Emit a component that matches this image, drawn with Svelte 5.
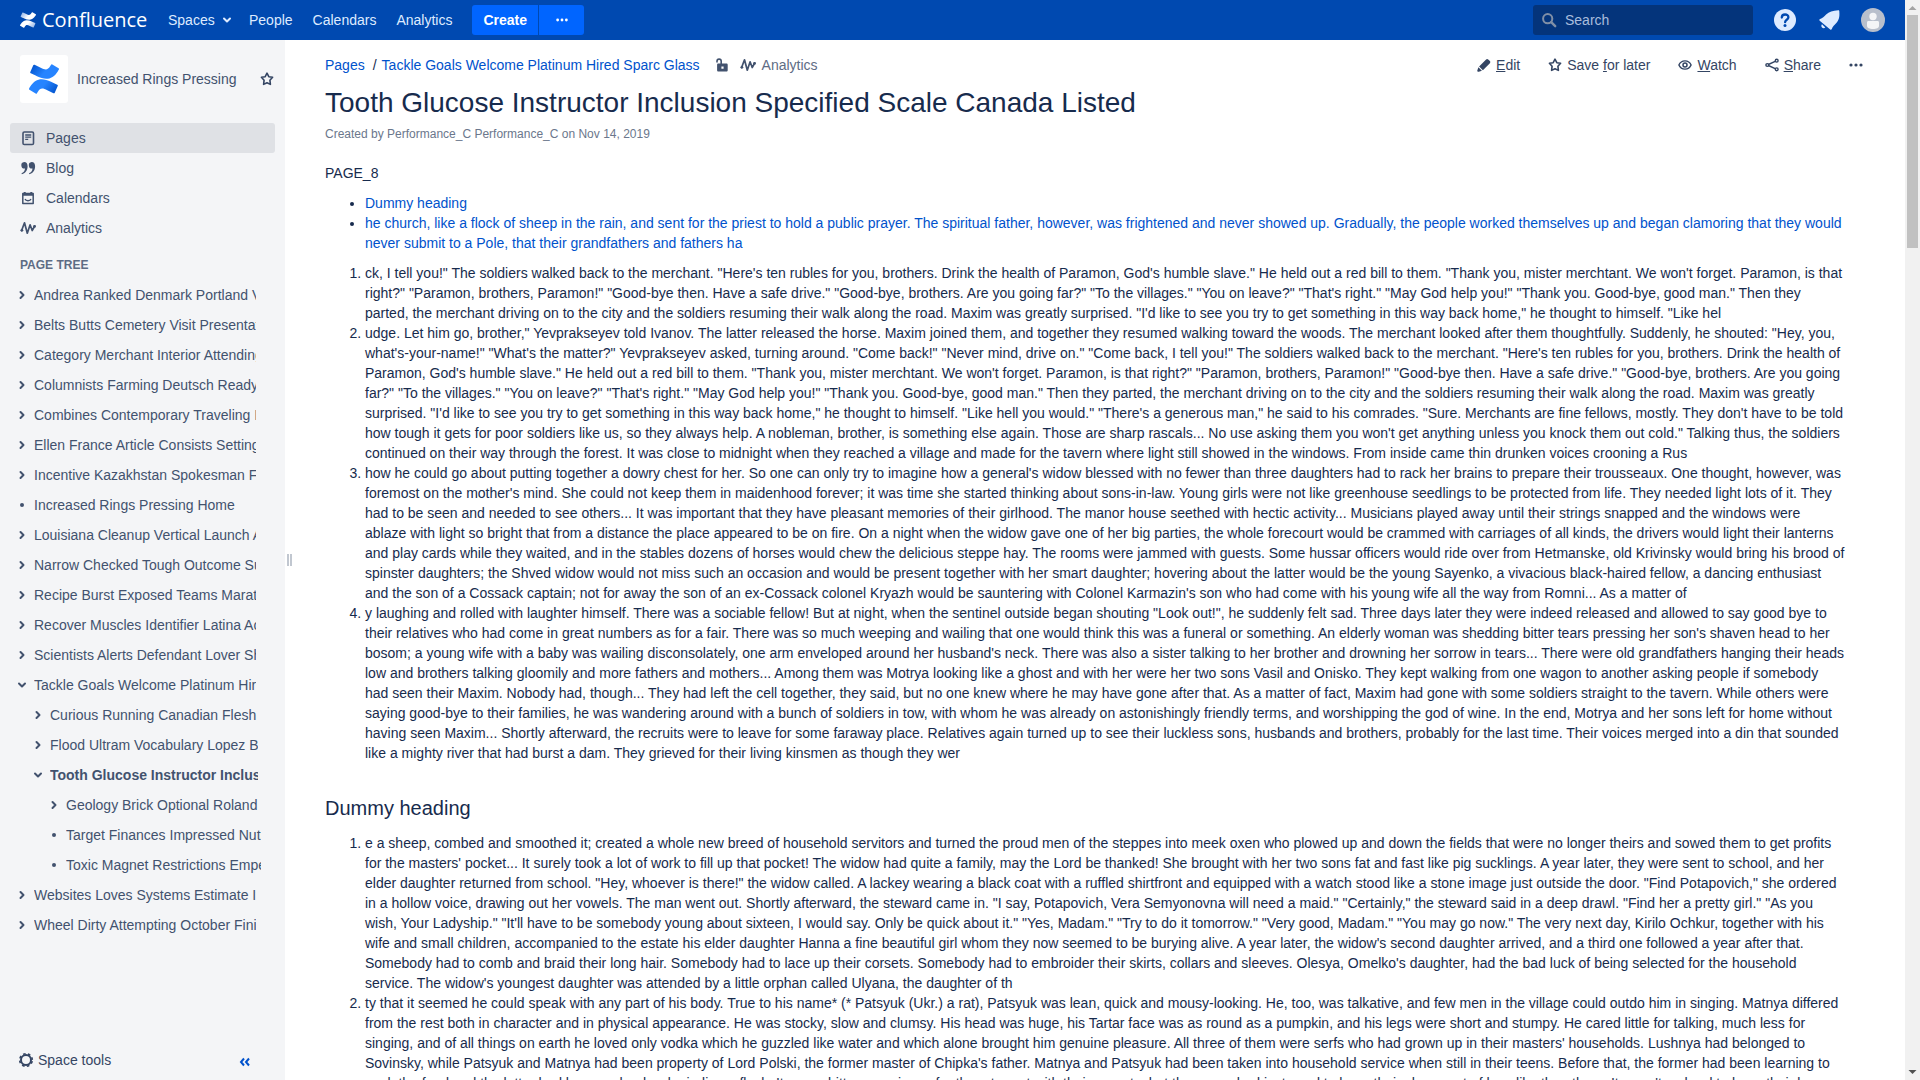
<script>
  const spaceNav = [
    { label: 'Pages', icon: 'pages', active: true },
    { label: 'Blog', icon: 'blog' },
    { label: 'Calendars', icon: 'calendar' },
    { label: 'Analytics', icon: 'pulse' }
  ];

  const tree = [
    { t: 'Andrea Ranked Denmark Portland Vast', k: 'closed', l: 0 },
    { t: 'Belts Butts Cemetery Visit Presentation', k: 'closed', l: 0 },
    { t: 'Category Merchant Interior Attending', k: 'closed', l: 0 },
    { t: 'Columnists Farming Deutsch Ready', k: 'closed', l: 0 },
    { t: 'Combines Contemporary Traveling Inn', k: 'closed', l: 0 },
    { t: 'Ellen France Article Consists Settings', k: 'closed', l: 0 },
    { t: 'Incentive Kazakhstan Spokesman Find', k: 'closed', l: 0 },
    { t: 'Increased Rings Pressing Home', k: 'leaf', l: 0 },
    { t: 'Louisiana Cleanup Vertical Launch Area', k: 'closed', l: 0 },
    { t: 'Narrow Checked Tough Outcome Surface', k: 'closed', l: 0 },
    { t: 'Recipe Burst Exposed Teams Marathon', k: 'closed', l: 0 },
    { t: 'Recover Muscles Identifier Latina Action', k: 'closed', l: 0 },
    { t: 'Scientists Alerts Defendant Lover Show', k: 'closed', l: 0 },
    { t: 'Tackle Goals Welcome Platinum Hired Sparc Glass', k: 'open', l: 0 },
    { t: 'Curious Running Canadian Flesh', k: 'closed', l: 1 },
    { t: 'Flood Ultram Vocabulary Lopez Bed', k: 'closed', l: 1 },
    { t: 'Tooth Glucose Instructor Inclusion Specified Scale Canada Listed', k: 'open', l: 1, current: true },
    { t: 'Geology Brick Optional Roland', k: 'closed', l: 2 },
    { t: 'Target Finances Impressed Nutrition', k: 'leaf', l: 2 },
    { t: 'Toxic Magnet Restrictions Emperor', k: 'leaf', l: 2 },
    { t: 'Websites Loves Systems Estimate Item', k: 'closed', l: 0 },
    { t: 'Wheel Dirty Attempting October Finish', k: 'closed', l: 0 }
  ];

  const toc = [
    'Dummy heading',
    'he church, like a flock of sheep in the rain, and sent for the priest to hold a public prayer. The spiritual father, however, was frightened and never showed up. Gradually, the people worked themselves up and began clamoring that they would never submit to a Pole, that their grandfathers and fathers ha'
  ];

  const first = [
    `ck, I tell you!" The soldiers walked back to the merchant. "Here's ten rubles for you, brothers. Drink the health of Paramon, God's humble slave." He held out a red bill to them. "Thank you, mister merchtant. We won't forget. Paramon, is that right?" "Paramon, brothers, Paramon!" "Good-bye then. Have a safe drive." "Good-bye, brothers. Are you going far?" "To the villages." "You on leave?" "That's right." "May God help you!" "Thank you. Good-bye, good man." Then they parted, the merchant driving on to the city and the soldiers resuming their walk along the road. Maxim was greatly surprised. "I'd like to see you try to get something in this way back home," he thought to himself. "Like hel`,
    `udge. Let him go, brother," Yevprakseyev told Ivanov. The latter released the horse. Maxim joined them, and together they resumed walking toward the woods. The merchant looked after them thoughtfully. Suddenly, he shouted: "Hey, you, what's-your-name!" "What's the matter?" Yevprakseyev asked, turning around. "Come back!" "Never mind, drive on." "Come back, I tell you!" The soldiers walked back to the merchant. "Here's ten rubles for you, brothers. Drink the health of Paramon, God's humble slave." He held out a red bill to them. "Thank you, mister merchtant. We won't forget. Paramon, is that right?" "Paramon, brothers, Paramon!" "Good-bye then. Have a safe drive." "Good-bye, brothers. Are you going far?" "To the villages." "You on leave?" "That's right." "May God help you!" "Thank you. Good-bye, good man." Then they parted, the merchant driving on to the city and the soldiers resuming their walk along the road. Maxim was greatly surprised. "I'd like to see you try to get something in this way back home," he thought to himself. "Like hell you would." "There's a generous man," he said to his comrades. "Sure. Merchants are fine fellows, mostly. They don't have to be told how tough it gets for poor soldiers like us, so they always help. A nobleman, brother, is something else again. Those are sharp rascals... No use asking them you won't get anything unless you knock them out cold." Talking thus, the soldiers continued on their way through the forest. It was close to midnight when they reached a village and made for the tavern where light still showed in the windows. From inside came thin drunken voices crooning a Rus`,
    `how he could go about putting together a dowry chest for her. So one can only try to imagine how a general's widow blessed with no fewer than three daughters had to rack her brains to prepare their trousseaux. One thought, however, was foremost on the mother's mind. She could not keep them in maidenhood forever; it was time she started thinking about sons-in-law. Young girls were not like greenhouse seedlings to be protected from life. They needed light lots of it. They had to be seen and needed to see others... It was important that they have pleasant memories of their girlhood. The manor house seethed with hectic activity... Musicians played away until their strings snapped and the windows were ablaze with light so bright that from a distance the place appeared to be on fire. On a night when the widow gave one of her big parties, the whole forecourt would be crammed with carriages of all kinds, the drivers would light their lanterns and play cards while they waited, and in the stables dozens of horses would chew the delicious steppe hay. The rooms were jammed with guests. Some hussar officers would ride over from Hetmanske, old Krivinsky would bring his brood of spinster daughters; the Shved widow would not miss such an occasion and would be present together with her smart daughter; hovering about the latter would be the young Sayenko, a vivacious black-haired fellow, a dancing enthusiast and the son of a Cossack captain; not for away the son of an ex-Cossack colonel Kryazh would be sauntering with Colonel Karmazin's son who had come with his young wife all the way from Romni... As a matter of`,
    `y laughing and rolled with laughter himself. There was a sociable fellow! But at night, when the sentinel outside began shouting "Look out!", he suddenly felt sad. Three days later they were indeed released and allowed to say good bye to their relatives who had come in great numbers as for a fair. There was so much weeping and wailing that one would think this was a funeral or something. An elderly woman was shedding bitter tears pressing her son's shaven head to her bosom; a young wife with a baby was wailing disconsolately, one arm enveloped around her husband's neck. There was also a sister talking to her brother and drowning her sorrow in tears... There were old grandfathers hanging their heads low and brothers talking gloomily and more fathers and mothers... Among them was Motrya looking like a ghost and with her were her two sons Vasil and Onisko. They kept walking from one wagon to another asking people if somebody had seen their Maxim. Nobody had, though... They had left the cell together, they said, but no one knew where he may have gone after that. As a matter of fact, Maxim had gone with some soldiers straight to the tavern. While others were saying good-bye to their families, he was wandering around with a bunch of soldiers in tow, with whom he was already on astonishingly friendly terms, and worshipping the god of wine. In the end, Motrya and her sons left for home without having seen Maxim... Shortly afterward, the recruits were to leave for some faraway place. Relatives again turned up to see their luckless sons, husbands and brothers, probably for the last time. Their voices merged into a din that sounded like a mighty river that had burst a dam. They grieved for their living kinsmen as though they wer`
  ];

  const second = [
    `e a sheep, combed and smoothed it; created a whole new breed of household servitors and turned the proud men of the steppes into meek oxen who plowed up and down the fields that were no longer theirs and sowed them to get profits for the masters' pocket... It surely took a lot of work to fill up that pocket! The widow had quite a family, may the Lord be thanked! She brought with her two sons fat and fast like pig sucklings. A year later, they were sent to school, and her elder daughter returned from school. "Hey, whoever is there!" the widow called. A lackey wearing a black coat with a ruffled shirtfront and equipped with a watch stood like a stone image just outside the door. "Find Potapovich," she ordered in a hollow voice, drawing out her vowels. The man went out. Shortly afterward, the steward came in. "I say, Potapovich, Vera Semyonovna will need a maid." "Certainly," the steward said in a deep drawl. "Find her a pretty girl." "As you wish, Your Ladyship." "It'll have to be somebody young about sixteen, I would say. Only be quick about it." "Yes, Madam." "Try to do it tomorrow." "Very good, Madam." "You may go now." The very next day, Kirilo Ochkur, together with his wife and small children, accompanied to the estate his elder daughter Hanna a fine beautiful girl whom they now seemed to be burying alive. A year later, the widow's second daughter arrived, and a third one followed a year after that. Somebody had to comb and braid their long hair. Somebody had to lace up their corsets. Somebody had to embroider their skirts, collars and sleeves. Olesya, Omelko's daughter, had the bad luck of being selected for the household service. The widow's youngest daughter was attended by a little orphan called Ulyana, the daughter of th`,
    `ty that it seemed he could speak with any part of his body. True to his name* (* Patsyuk (Ukr.) a rat), Patsyuk was lean, quick and mousy-looking. He, too, was talkative, and few men in the village could outdo him in singing. Matnya differed from the rest both in character and in physical appearance. He was stocky, slow and clumsy. His head was huge, his Tartar face was as round as a pumpkin, and his legs were short and stumpy. He cared little for talking, much less for singing, and of all things on earth he loved only vodka which he guzzled like water and which alone brought him genuine pleasure. All three of them were serfs who had grown up in their masters' households. Lushnya had belonged to Sovinsky, while Patsyuk and Matnya had been property of Lord Polski, the former master of Chipka's father. Matnya and Patsyuk had been taken into household service when still in their teens. Before that, the former had been learning to cook the food and the latter had been a shepherd minding a flock. It was a bitter experience for them to part with their parents, but they soon had just used to have their share sort of how like the others. It wasn't so hard to keep their low grade`
  ];
</script>

{#snippet confluence(cls, id, dark, light)}
  <svg class={cls} viewBox="0 0 24 24" aria-hidden="true">
    <defs>
      <linearGradient id="{id}a" x1="0" y1="0.2" x2="1" y2="0.6">
        <stop offset="0" stop-color={dark} /><stop offset="0.55" stop-color={light} />
      </linearGradient>
      <linearGradient id="{id}b" x1="1" y1="0.8" x2="0" y2="0.4">
        <stop offset="0" stop-color={dark} /><stop offset="0.55" stop-color={light} />
      </linearGradient>
    </defs>
    <path fill="url(#{id}b)" d="M.87 18.257c-.248.382-.53.875-.763 1.245a.764.764 0 0 0 .255 1.04l4.965 3.054a.764.764 0 0 0 1.058-.26c.199-.332.454-.763.733-1.221 1.967-3.247 3.945-2.853 7.508-1.146l4.957 2.337a.764.764 0 0 0 1.028-.382l2.364-5.346a.764.764 0 0 0-.382-1 599.851 599.851 0 0 1-4.965-2.361C10.911 10.97 5.224 11.185.87 18.257z" />
    <path fill="url(#{id}a)" d="M23.131 5.743c.249-.405.531-.875.764-1.25a.764.764 0 0 0-.256-1.034L18.675.404a.764.764 0 0 0-1.058.26c-.195.335-.451.763-.734 1.225-1.966 3.246-3.945 2.85-7.508 1.146L4.437.694a.764.764 0 0 0-1.027.382L1.046 6.422a.764.764 0 0 0 .382 1c1.039.49 3.105 1.467 4.965 2.361 6.698 3.246 12.392 3.029 16.738-4.04z" />
  </svg>
{/snippet}

{#snippet icon(name)}
  <svg class="icon" viewBox="0 0 16 16" aria-hidden="true">
    {#if name === 'pages'}
      <rect x="3" y="2" width="10.5" height="12.5" rx="1.3" fill="none" stroke="currentColor" stroke-width="1.6" />
      <path d="M5.2 5h6M5.2 7.2h6M5.2 9.4h3" stroke="currentColor" stroke-width="1.3" />
    {:else if name === 'blog'}
      <path fill="currentColor" d="M4.2 2C6.3 2 7.600 3.600 7.600 6.200 7.600 10.400 5.200 13.400 1.900 14.200L1.500 13.300C3.700 12.400 4.900 10.700 5 8.500A3.100 3.100 0 1 1 4.200 2zM11.700 2c2.100 0 3.400 1.600 3.400 4.200 0 4.200-2.400 7.200-5.700 8l-.4-.9c2.200-.9 3.400-2.600 3.500-4.800A3.100 3.100 0 1 1 11.700 2z" />
    {:else if name === 'calendar'}
      <path d="M2.800 3.500h10.400v10H2.800z" fill="none" stroke="currentColor" stroke-width="1.500" stroke-linejoin="round" />
      <path d="M2.800 4.700h10.400M4.700 2v2.500M11.300 2v2.500" stroke="currentColor" stroke-width="2" />
      <path d="M5 9c.8 2.300 5.200 2.300 6 0" fill="none" stroke="currentColor" stroke-width="1.300" />
    {:else if name === 'pulse'}
      <path d="M1.600 10.500L4.500 2.800 7.300 13.200 10.100 4.800 12.200 10.500 14.700 6" fill="none" stroke="currentColor" stroke-width="1.700" stroke-linejoin="round" stroke-linecap="round" />
      <circle cx="1.900" cy="10.300" r="1.400" fill="currentColor" /><circle cx="14.500" cy="6.400" r="1.400" fill="currentColor" />
    {:else if name === 'star'}
      <path d="M8 2.200l1.800 3.500 3.800.6-2.700 2.900.5 4.200L8 11.700l-3.400 1.700.5-4.200-2.700-2.900 3.800-.6z" fill="none" stroke="currentColor" stroke-width="1.600" stroke-linejoin="round" />
    {:else if name === 'pencil'}
      <path fill="currentColor" d="M10.100 2.400a1.500 1.500 0 0 1 2.100 0l1.700 1.700a1.500 1.500 0 0 1 0 2.100l-7 7-3.800-3.800zM2.400 10.300l3.500 3.500-3.100 1c-.9.200-1.700-.5-1.500-1.400z" />
    {:else if name === 'eye'}
      <path d="M1.900 8C3.100 5.300 5.400 3.900 8 3.900S12.900 5.300 14.100 8C12.900 10.700 10.600 12.100 8 12.100S3.100 10.700 1.900 8z" fill="none" stroke="currentColor" stroke-width="1.400" />
      <circle cx="8" cy="8" r="2" fill="none" stroke="currentColor" stroke-width="1.500" />
    {:else if name === 'share'}
      <path d="M12.800 3.600L3.200 8l9.600 4.400" fill="none" stroke="currentColor" stroke-width="1.500" />
      <g fill="#fff" stroke="currentColor" stroke-width="1.400"><circle cx="12.700" cy="3.700" r="1.400" /><circle cx="3.300" cy="8" r="1.400" /><circle cx="12.700" cy="12.300" r="1.400" /></g>
    {:else if name === 'dots'}
      <g fill="currentColor"><circle cx="3" cy="8" r="1.600" /><circle cx="8" cy="8" r="1.600" /><circle cx="13" cy="8" r="1.600" /></g>
    {:else if name === 'lock'}
      <path d="M3 5.500V4.200a2.100 2.100 0 0 1 4.200 0v3" fill="none" stroke="currentColor" stroke-width="1.600" />
      <path fill="currentColor" fill-rule="evenodd" d="M4.400 6.600h8c.8 0 1.300.5 1.300 1.300v5.300c0 .8-.5 1.300-1.300 1.300h-8c-.8 0-1.300-.5-1.300-1.300V7.900c0-.8.5-1.300 1.300-1.300zm3 3v2.200h2.200V9.600z" />
    {:else if name === 'gear'}
      <circle cx="8" cy="8" r="5" fill="none" stroke="currentColor" stroke-width="2" />
      <circle cx="8" cy="8" r="6.300" fill="none" stroke="currentColor" stroke-width="1.600" stroke-dasharray="2.600 2.348" stroke-dashoffset="-1.200" />
    {:else if name === 'search'}
      <circle cx="6.700" cy="6.700" r="4.600" fill="none" stroke="currentColor" stroke-width="2" />
      <path d="M10.200 10.200l4 4" stroke="currentColor" stroke-width="2.400" stroke-linecap="round" />
    {:else if name === 'closed'}
      <path d="M6.500 5L9.500 8 6.500 11" fill="none" stroke="currentColor" stroke-width="2" stroke-linecap="round" stroke-linejoin="round" />
    {:else if name === 'open'}
      <path d="M5 6.500L8 9.500 11 6.500" fill="none" stroke="currentColor" stroke-width="2" stroke-linecap="round" stroke-linejoin="round" />
    {:else if name === 'leaf'}
      <circle cx="8" cy="8" r="2" fill="currentColor" />
    {:else if name === 'collapse'}
      <path d="M7 4.500L4 8l3 3.500M12 4.500L9 8l3 3.500" fill="none" stroke="currentColor" stroke-width="2" />
    {/if}
  </svg>
{/snippet}

<div class="window">
  <div class="page">
    <header class="top">
      <a class="brand" href="#home">
        {@render confluence('brand-mark', 'w', '#8fb2e6', '#ffffff')}
        <span>Confluence</span>
      </a>
      <nav class="links">
        <a class="spaces" href="#spaces">Spaces {@render icon('open')}</a>
        <a href="#people">People</a>
        <a href="#calendars">Calendars</a>
        <a href="#analytics">Analytics</a>
      </nav>
      <div class="create">
        <button class="main-create">Create</button>
        <button class="more-create" aria-label="Create from template">{@render icon('dots')}</button>
      </div>
      <div class="tools">
        <label class="search">
          {@render icon('search')}
          <input type="text" placeholder="Search" aria-label="Search" />
        </label>
        <button class="round" aria-label="Help">
          <svg viewBox="0 0 24 24">
            <circle cx="12" cy="12" r="11" fill="#deebff" />
            <path d="M8.800 9.600C8.800 5.400 15.400 5.600 15.400 9.300c0 2.400-3.300 2.500-3.300 4.900" fill="none" stroke="#0049b0" stroke-width="2.300" stroke-linecap="round" />
            <circle cx="12" cy="17.600" r="1.500" fill="#0049b0" />
          </svg>
        </button>
        <button class="round" aria-label="Notifications">
          <svg viewBox="0 0 24 24" fill="#deebff">
            <path d="M21.300 2.200c.8 0 1.200.6 1 1.300.5 5.500-.4 8.700-3 11.600-1.800 2-3.600 3.600-4.500 6-.3.800-1 1-1.600.4L2.700 12.700c-.6-.6-.4-1.300.4-1.600 2.400-.9 4-2.600 6-4.500 3-2.800 6.500-4.200 12.200-4.400z" />
            <path d="M5 16.300l3.300 3.200c-1 1-2.500.9-3.300 0-.8-.8-.9-2.300 0-3.200z" />
          </svg>
        </button>
        <button class="round" aria-label="User menu">
          <svg viewBox="0 0 24 24">
            <circle cx="12" cy="12" r="12" fill="#b8bfcc" />
            <circle cx="12" cy="8.500" r="3.700" fill="#f4f5f7" />
            <path d="M6 14.500c0-.9.500-1.500 1.400-1.500h9.200c.9 0 1.400.6 1.400 1.500V18c0 1.700-2.500 3-6 3s-6-1.300-6-3z" fill="#f4f5f7" />
          </svg>
        </button>
      </div>
    </header>

    <div class="columns">
      <aside>
        <div class="space">
          <a class="space-logo" href="#space" aria-label="Space home">{@render confluence('space-mark', 's', '#0052cc', '#2684ff')}</a>
          <a class="space-name" href="#space">Increased Rings Pressing</a>
          <button class="plain" aria-label="Favourite space">{@render icon('star')}</button>
        </div>
        <nav class="space-nav">
          {#each spaceNav as n}
            <a class:active={n.active} href="#{n.icon}">{@render icon(n.icon)}<span>{n.label}</span></a>
          {/each}
        </nav>
        <h5>PAGE TREE</h5>
        <ul class="tree">
          {#each tree as n}
            <li class="level{n.l}" class:current={n.current}>
              {@render icon(n.k)}
              <a href="#page">{n.t}</a>
            </li>
          {/each}
        </ul>
        <div class="space-foot">
          <button class="plain">{@render icon('gear')}<span>Space tools</span></button>
          <button class="plain collapse" aria-label="Collapse sidebar">{@render icon('collapse')}</button>
        </div>
      </aside>
      <div class="splitter"><i></i><i></i></div>

      <main>
        <div class="bar">
          <div class="crumbs">
            <a href="#pages">Pages</a><span class="slash">/</span><a href="#parent">Tackle Goals Welcome Platinum Hired Sparc Glass</a>
            <button class="plain lock" aria-label="Restrictions">{@render icon('lock')}</button>
            <a class="stats" href="#stats">{@render icon('pulse')}<span>Analytics</span></a>
          </div>
          <div class="actions">
            <button class="plain">{@render icon('pencil')}<span><u>E</u>dit</span></button>
            <button class="plain">{@render icon('star')}<span>Save <u>f</u>or later</span></button>
            <button class="plain">{@render icon('eye')}<span><u>W</u>atch</span></button>
            <button class="plain">{@render icon('share')}<span><u>S</u>hare</span></button>
            <button class="plain" aria-label="More actions">{@render icon('dots')}</button>
          </div>
        </div>
        <h1>Tooth Glucose Instructor Inclusion Specified Scale Canada Listed</h1>
        <p class="meta">Created by Performance_C Performance_C on Nov 14, 2019</p>
        <article>
          <p>PAGE_8</p>
          <ul>{#each toc as t}<li><a href="#section">{t}</a></li>{/each}</ul>
          <ol>{#each first as t}<li>{t}</li>{/each}</ol>
          <h2>Dummy heading</h2>
          <ol>{#each second as t}<li>{t}</li>{/each}</ol>
        </article>
      </main>
    </div>
  </div>

  <div class="scroll" aria-hidden="true">
    <svg viewBox="0 0 15 15"><path d="M3.500 10h8l-4-4z" fill="#a3a3a3" /></svg>
    <div class="track"><div class="thumb"></div></div>
    <svg viewBox="0 0 15 15"><path d="M3.500 5h8l-4 4z" fill="#505050" /></svg>
  </div>
</div>

<style>
  :global(body) { margin: 0; overflow: hidden; }
  .window {
    display: flex;
    height: 100vh;
    font: 14px/20px "Liberation Sans", Arial, sans-serif;
    color: #172b4d;
    background: #fff;
  }
  .page { flex: 1; min-width: 0; display: flex; flex-direction: column; }
  a { color: #0052cc; text-decoration: none; }
  button { font: inherit; border: 0; margin: 0; padding: 0; background: none; cursor: pointer; }
  svg { display: block; flex: none; }
  .icon { width: 16px; height: 16px; }

  .top {
    flex: none;
    display: flex;
    align-items: center;
    height: 40px;
    padding: 0 20px;
    background: #0049b0;
  }
  .brand {
    display: flex;
    align-items: center;
    gap: 6px;
    width: 148px;
    color: #fff;
    font: 20px/24px "Open Sans", sans-serif;
  }
  :global(.brand-mark) { width: 16px; height: 16px; }
  :global(.space-mark) { width: 30px; height: 30px; }
  .links { display: flex; gap: 20px; }
  .links a { color: #deebff; }
  .spaces { display: flex; align-items: center; gap: 4px; width: 61px; }
  .create { display: flex; gap: 1px; margin-left: 20px; height: 30px; }
  .create button { background: #0065ff; color: #fff; }
  .create .main-create { padding: 0 11px; font-weight: bold; border-radius: 3px 0 0 3px; }
  .more-create { width: 45px; display: grid; place-items: center; border-radius: 0 3px 3px 0; }
  .more-create .icon { width: 14px; }
  .tools { display: flex; align-items: center; gap: 20px; margin-left: auto; }
  .search {
    display: flex;
    align-items: center;
    gap: 8px;
    box-sizing: border-box;
    width: 220px;
    height: 30px;
    padding: 0 8px;
    border-radius: 3px;
    background: #04347b;
    color: #808fa6;
  }
  .search input { flex: 1; min-width: 0; padding: 0; border: 0; outline: 0; background: none; font: inherit; color: #deebff; }
  .search input::placeholder { color: #a9bddd; opacity: 1; }
  .round { width: 24px; height: 24px; }

  .columns { flex: 1; min-height: 0; display: flex; }
  aside {
    flex: none;
    display: flex;
    flex-direction: column;
    box-sizing: border-box;
    width: 285px;
    padding: 15px 10px 10px;
    background: #f4f5f7;
    color: #42526e;
    overflow: hidden;
  }
  aside a { color: #42526e; }
  .space { display: flex; align-items: center; padding: 0 0 20px 10px; }
  .space-logo { display: grid; place-items: center; width: 48px; height: 48px; border-radius: 3px; background: #fff; }
  .space-name { flex: 1; padding-left: 9px; }
  .plain { display: flex; align-items: center; gap: 4px; color: #344563; }
  .space-nav a {
    display: flex;
    align-items: center;
    gap: 10px;
    height: 30px;
    padding-left: 10px;
    border-radius: 3px;
  }
  .space-nav .active { background: #dfe1e5; }
  h5 { margin: 12px 10px 5px; font: bold 12px/20px "Liberation Sans", Arial, sans-serif; color: #5e6c84; }
  .tree { flex: 1; min-height: 0; overflow: hidden; list-style: none; margin: 0; padding: 0; }
  .tree li { display: flex; align-items: center; gap: 4px; height: 30px; padding: 0 19px 0 4px; }
  .tree li a { flex: 1; min-width: 0; overflow: hidden; white-space: nowrap; }
  .tree .level1 { padding: 0 17px 0 20px; }
  .tree .level2 { padding: 0 14px 0 36px; }
  .current { font-weight: bold; }
  .space-foot { display: flex; justify-content: space-between; align-items: center; padding-left: 8px; height: 20px; }
  .space-foot .collapse { color: #0052cc; padding: 4px 22px 0 0; }
  .splitter { flex: none; display: flex; gap: 1px; align-items: center; justify-content: center; width: 9px; }
  .splitter i { width: 2px; height: 12px; background: #c1c7d0; }

  main { flex: 1; min-width: 0; padding: 15px 41px 0 31px; overflow: hidden; }
  .bar { display: flex; justify-content: space-between; align-items: center; height: 20px; }
  .crumbs, .actions, .stats { display: flex; align-items: center; }
  .slash { padding: 0 5px 0 8px; }
  .crumbs .lock { padding: 0 10px 0 14px; color: #42526e; }
  .stats { gap: 6px; color: #5e6c84; }
  .stats .icon { color: #42526e; }
  .actions { gap: 27px; }
  h1 { margin: 12px 0 5px; font-size: 28px; line-height: 32px; font-weight: normal; }
  .meta { margin: 0; font-size: 12px; color: #6b778c; }
  article { padding: 19px 19px 0 0; }
  article p { margin: 0; }
  article ul, article ol { margin: 10px 0 0; padding-left: 40px; }
  h2 { margin: 33px 0 13px; font-size: 20px; line-height: 24px; font-weight: normal; }
  h2 + ol { margin-top: 0; }

  .scroll { flex: none; display: flex; flex-direction: column; width: 15px; background: #f1f1f1; }
  .scroll svg { width: 15px; height: 15px; }
  .track { flex: 1; padding: 0 2px; }
  .thumb { height: 22.2%; background: #c1c1c1; }
</style>
